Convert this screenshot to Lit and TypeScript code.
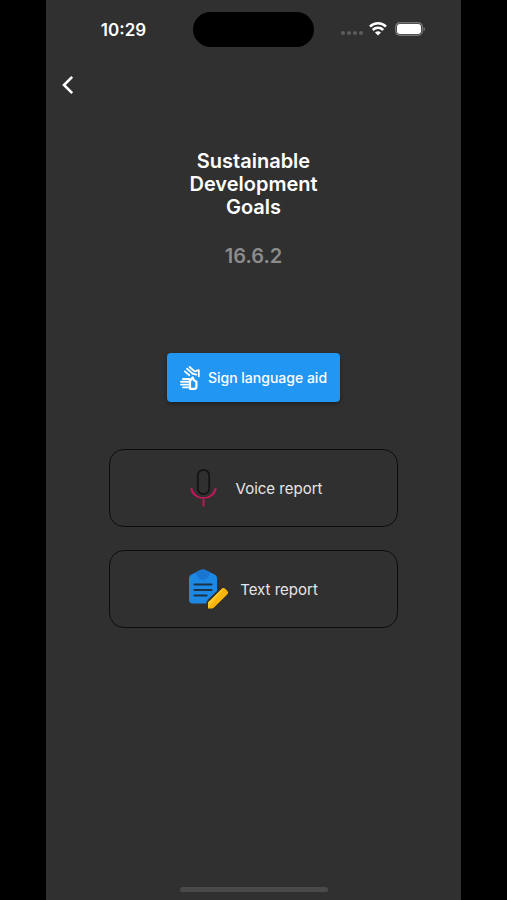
import { LitElement, html, css, svg } from "lit";
import { customElement } from "lit/decorators.js";

const wifiIcon = svg`
  <svg class="wifi" viewBox="0 0 18 14" aria-hidden="true">
    <path d="M1 4.600a11.400 11.400 0 0 1 16 0" />
    <path d="M3.800 8a7.400 7.400 0 0 1 10.400 0" />
    <path class="solid" d="M9 13.600 6 10.600a4.300 4.300 0 0 1 6 0z" />
  </svg>`;

const batteryIcon = svg`
  <svg class="battery" viewBox="0 0 31 14" aria-hidden="true">
    <rect x="0.7" y="0.7" width="26.6" height="12.6" rx="4.2" fill="none" stroke="#747474" stroke-width="1.4" />
    <rect x="2" y="2" width="24" height="10" rx="3" fill="#fff" />
    <path d="M28.6 4.9c1.6.4 1.6 3.8 0 4.2z" fill="#858585" />
  </svg>`;

const backIcon = svg`
  <svg class="back-icon" viewBox="0 0 12 20" aria-hidden="true">
    <path d="M10.2 1.8 2 10l8.2 8.2" />
  </svg>`;

const signIcon = svg`
  <svg class="sign-icon" viewBox="0 0 20 24" aria-hidden="true">
    <g fill="none" stroke="#fff" stroke-linecap="round" stroke-linejoin="round">
      <g stroke-width="1.8">
        <path d="M9.600 1 14.600 5.400 18.800 4.200V10.400" />
        <path d="M7 2.800 12.400 7.400" />
        <path d="M4.800 5.400 9.400 9.200" />
        <path d="M12.400 7.600 16.400 8.600" />
      </g>
      <g stroke-width="1.900">
        <path d="M3 13h6.400" />
        <path d="M1 15.800h8" />
        <path d="M1 18.600h8" />
        <path d="M3 21.400h6" />
      </g>
      <path stroke-width="2.200" d="M12.600 11.400 10 15v7.800h4q2.400 0 2.400-2.400V15.600l-2.400-1.400z" />
    </g>
  </svg>`;

const micIcon = svg`
  <svg class="report-icon" viewBox="0 0 40 40" aria-hidden="true">
    <rect x="12.800" y="2" width="11.400" height="24" rx="5.200" fill="none" stroke="#141414" stroke-width="1.800" />
    <path d="M6.200 20a12.400 11.600 0 0 0 24.600 0M18.500 31.400v7" fill="none" stroke="#c2185b" stroke-width="1.900" />
  </svg>`;

const noteIcon = svg`
  <svg class="report-icon" viewBox="0 0 40 40" aria-hidden="true">
    <path d="M3.500 5 10.500 1.600q3.500-2.400 7 0L24.500 5Q28 6.200 28 9.500V22l-9.500 9v3.500H4q-4 0-4-4v-21Q0 6.200 3.500 5z" fill="#1e88e5" />
    <path d="M7 3.300 10.500 1.600q3.500-2.400 7 0L21 3.300q-.5 4.700-4.500 7.200-2.500 1.600-5 0-4-2.500-4.500-7.200z" fill="#1976d2" />
    <path d="M5.500 15.500h17M5.500 21h17M5.500 26.500h12" stroke="#1c3247" stroke-width="2.200" stroke-linecap="round" />
    <path d="M19 39.500v-6L33 19.800q1.600-1.600 3.200 0l2.200 2.200q1.600 1.600 0 3.200L25 38.600q-1 .9-2.200.9z" fill="#fbb40c" stroke="#303030" stroke-width="3" paint-order="stroke" />
    <path d="M19 39.500v-6L33 19.800q1-1 2-.8z" fill="#ffc928" />
  </svg>`;

@customElement("app-root")
export class AppRoot extends LitElement {
  static styles = css`
    :host {
      display: block;
      background: #000;
      font-family: Inter, "Liberation Sans", sans-serif;
    }
    * {
      box-sizing: border-box;
    }
    svg {
      display: block;
      flex: none;
    }
    button {
      font: inherit;
      color: inherit;
      cursor: pointer;
    }
    .phone {
      display: flex;
      flex-direction: column;
      max-width: 415px;
      min-height: 100vh;
      margin: 0 auto;
      background: #303030;
      color: #fff;
    }
    .status {
      display: grid;
      grid-template-columns: 1fr 121px 1fr;
      align-items: center;
      padding-top: 12px;
    }
    .time {
      justify-self: center;
      padding-left: 8px;
      font-size: 17px;
      font-weight: 600;
      line-height: 20px;
    }
    .island {
      height: 35px;
      border-radius: 18px;
      background: #000;
    }
    .indicators {
      display: flex;
      justify-content: flex-end;
      align-items: center;
      padding: 0 35px 2px 0;
    }
    .dots {
      display: flex;
      gap: 2px;
      margin: 8px 6px 0 0;
    }
    .dot {
      width: 4px;
      height: 4px;
      border-radius: 2px;
      background: #5c5c5c;
    }
    .wifi {
      width: 18px;
      height: 14px;
      margin-right: 8px;
      fill: none;
      stroke: #fff;
      stroke-width: 2.5;
    }
    .solid {
      fill: #fff;
      stroke: none;
    }
    .battery {
      width: 31px;
      height: 14px;
    }
    .bar {
      padding: 18px 6px;
    }
    .back {
      display: flex;
      padding: 10px;
      border: 0;
      background: none;
    }
    .back-icon {
      width: 12px;
      height: 20px;
      fill: none;
      stroke: #fff;
      stroke-width: 2.6;
    }
    main {
      flex: 1;
      display: flex;
      flex-direction: column;
      align-items: center;
      padding: 27px 63px 24px;
    }
    h1 {
      max-width: 160px;
      margin: 0;
      font-size: 20px;
      font-weight: 600;
      line-height: 23px;
      text-align: center;
    }
    .code {
      margin: 25px 0 85px;
      color: #8c8c8c;
      font-size: 20px;
      font-weight: 600;
      line-height: 24px;
    }
    .sign {
      display: flex;
      align-items: center;
      gap: 8px;
      height: 49px;
      padding: 0 13px;
      border: 0;
      border-radius: 4px;
      background: #2196f3;
      box-shadow: 0 2px 4px rgba(0, 0, 0, 0.35);
      font-size: 14px;
      font-weight: 500;
    }
    .sign-icon {
      width: 20px;
      height: 24px;
    }
    .reports {
      align-self: stretch;
      display: flex;
      flex-direction: column;
      gap: 23px;
      margin-top: 47px;
    }
    .report {
      display: flex;
      align-items: center;
      justify-content: center;
      gap: 11px;
      height: 78px;
      border: 1px solid #0c0c0c;
      border-radius: 15px;
      background: none;
      color: #e6e6e6;
      font-size: 15px;
    }
    .report-icon {
      width: 40px;
      height: 40px;
    }
    .home {
      align-self: center;
      width: 148px;
      height: 5px;
      margin-bottom: 8px;
      border-radius: 3px;
      background: #4a4a4a;
    }
  `;

  render() {
    return html`
      <div class="phone">
        <div class="status">
          <span class="time">10:29</span>
          <div class="island"></div>
          <div class="indicators">
            <div class="dots">
              ${[0, 1, 2, 3].map(() => html`<i class="dot"></i>`)}
            </div>
            ${wifiIcon} ${batteryIcon}
          </div>
        </div>
        <nav class="bar">
          <button class="back" aria-label="Back">${backIcon}</button>
        </nav>
        <main>
          <h1>Sustainable Development Goals</h1>
          <p class="code">16.6.2</p>
          <button class="sign">${signIcon}<span>Sign language aid</span></button>
          <div class="reports">
            <button class="report">${micIcon}<span>Voice report</span></button>
            <button class="report">${noteIcon}<span>Text report</span></button>
          </div>
        </main>
        <div class="home"></div>
      </div>
    `;
  }
}
